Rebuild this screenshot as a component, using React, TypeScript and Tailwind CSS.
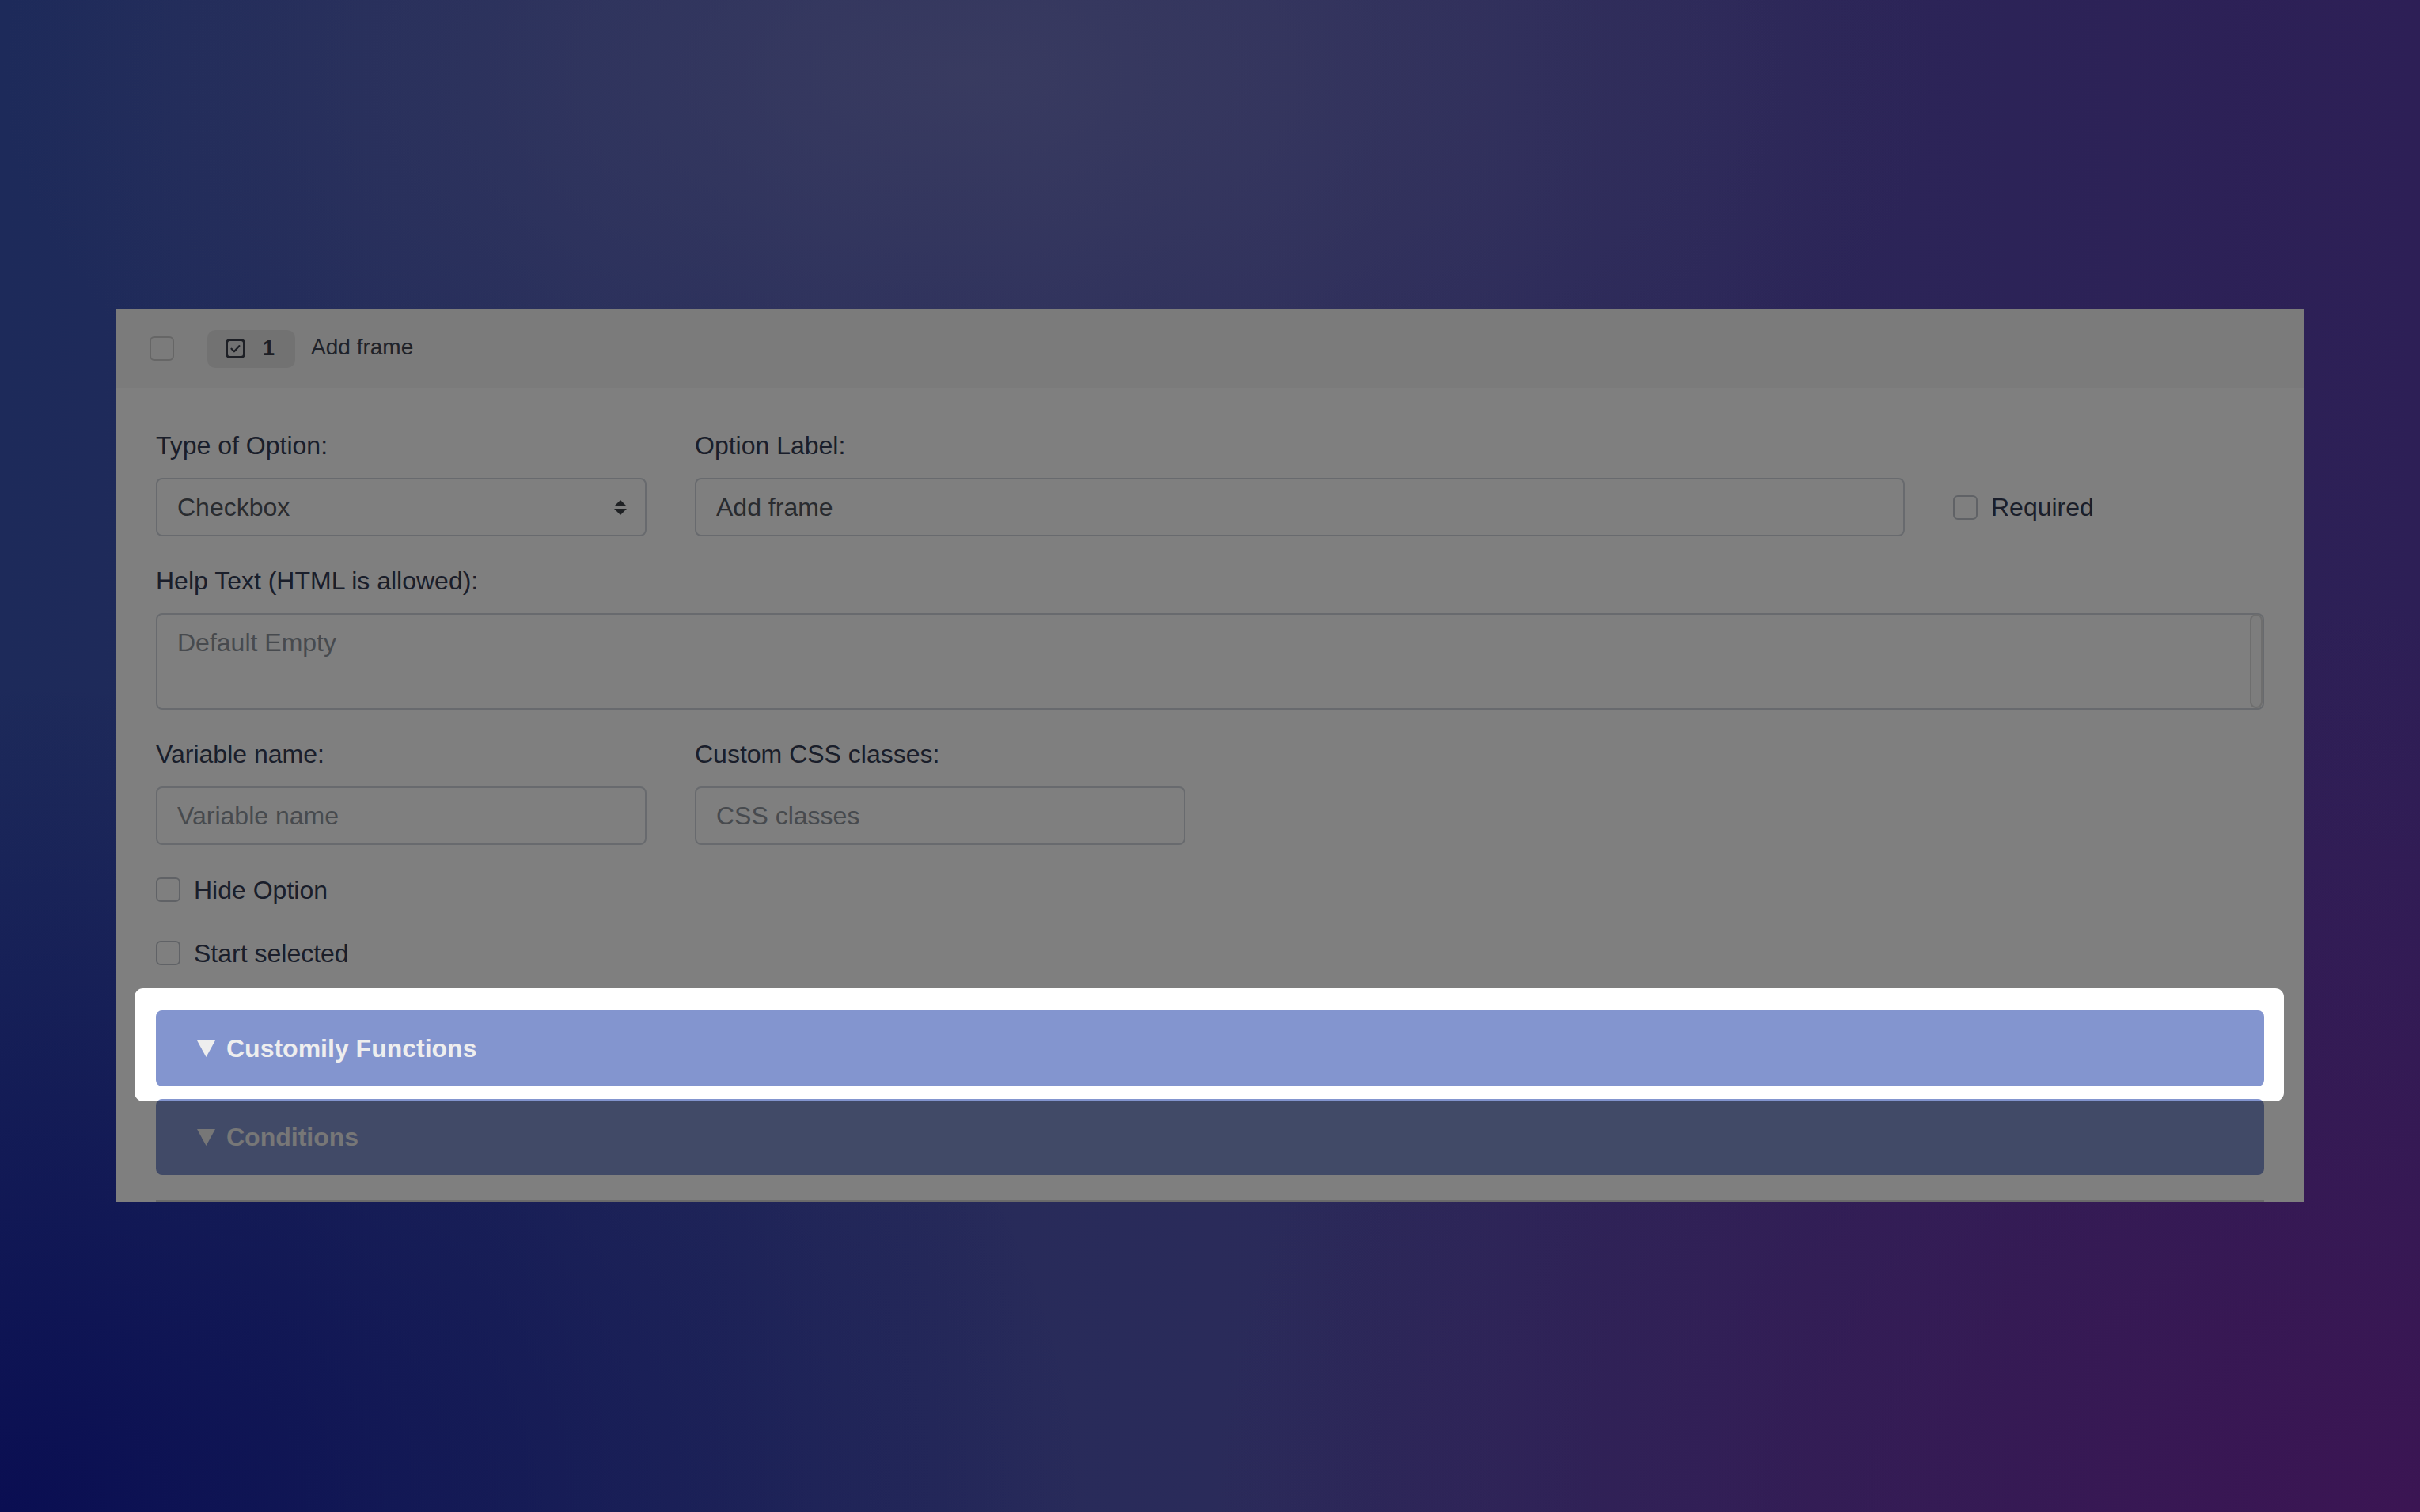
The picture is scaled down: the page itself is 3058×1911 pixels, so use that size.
function Box({ className = '' }: { className?: string }) {
  return <span className={`block h-[31px] w-[31px] shrink-0 rounded-[6px] border-2 ${className}`} />;
}

function FieldLabel({ children }: { children: React.ReactNode }) {
  return <label className="mb-[17px] block text-[32px] leading-[47px] text-[#343d55]">{children}</label>;
}

function CheckRow({ label, last = false }: { label: string; last?: boolean }) {
  return (
    <div className={`flex h-[47px] items-center gap-[17px] ${last ? '' : 'mb-[33px]'}`}>
      <Box className="border-[#c0c5cc] bg-white" />
      <span className="text-[32px] text-[#343d55]">{label}</span>
    </div>
  );
}

function Caret() {
  return (
    <svg width="23" height="21" viewBox="0 0 23 21" className="shrink-0">
      <polygon points="0,0 23,0 11.5,21" fill="currentColor" />
    </svg>
  );
}

const input =
  'h-[74px] w-full rounded-[8px] border-2 border-[#d0d5dc] bg-white px-[25px] text-[32px] text-[#52575e] outline-none placeholder:text-[#8f959d]';

const bar =
  'relative flex h-[96px] items-center gap-[14px] rounded-[8px] bg-[#8395cf] pl-[52px] text-[32px] font-bold text-[#eeeeee]';

export default function App() {
  return (
    <div className="min-h-screen bg-[radial-gradient(ellipse_40%_35%_at_40%_5%,rgba(62,64,98,0.75),transparent),radial-gradient(ellipse_45%_55%_at_0%_100%,#0a0e52,transparent),radial-gradient(ellipse_50%_60%_at_100%_100%,#3b1553,transparent),linear-gradient(90deg,#1d2a5a,#2a2b5a_50%,#2d1f56)] pt-[390px] font-['Liberation_Sans',Arial,sans-serif]">
      <div className="relative mx-auto w-[2766px] overflow-hidden bg-white">
        {/* header */}
        <div className="flex h-[101px] items-center bg-[#f6f6f6] pl-[43px]">
          <Box className="border-[#cccccc] bg-transparent" />
          <div className="ml-[42px] flex h-[48px] items-center gap-[22px] rounded-[10px] bg-[#e5e5e5] pl-[23px] pr-[26px]">
            <svg width="25" height="25" viewBox="0 0 25 25" fill="none" stroke="#3a3f4a">
              <rect x="1.5" y="1.5" width="22" height="22" rx="4" strokeWidth="3" />
              <path d="M7.5 12.8l3.4 3.4 6.4-7" strokeWidth="2.3" strokeLinecap="round" strokeLinejoin="round" />
            </svg>
            <span className="text-[27px] font-bold text-[#3a3f4a]">1</span>
          </div>
          <span className="mb-[4px] ml-[20px] text-[28px] text-[#3e4452]">Add frame</span>
        </div>

        {/* body */}
        <div className="px-[51px] pt-[49px]">
          <div className="mb-[33px] flex gap-[61px]">
            <div className="w-[620px]">
              <FieldLabel>Type of Option:</FieldLabel>
              <div className="flex h-[74px] items-center justify-between rounded-[8px] border-2 border-[#d0d5dc] bg-white pl-[25px] pr-[23px] text-[32px] text-[#52575e]">
                <span>Checkbox</span>
                <svg width="16" height="19" viewBox="0 0 16 19" fill="#3e4249">
                  <polygon points="0,8 8,0 16,8" />
                  <polygon points="0,11 8,19 16,11" />
                </svg>
              </div>
            </div>
            <div className="w-[1529px]">
              <FieldLabel>Option Label:</FieldLabel>
              <input className={input} defaultValue="Add frame" />
            </div>
            <div className="flex h-[74px] items-center gap-[17px] self-end">
              <Box className="border-[#c0c5cc] bg-white" />
              <span className="text-[32px] text-[#343d55]">Required</span>
            </div>
          </div>

          <div className="mb-[33px]">
            <FieldLabel>Help Text (HTML is allowed):</FieldLabel>
            <div className="relative">
              <textarea
                className="block h-[122px] w-full resize-none rounded-[8px] border-2 border-[#d0d5dc] bg-white px-[25px] pt-[12px] text-[32px] leading-[47px] text-[#52575e] outline-none placeholder:text-[#8f959d]"
                placeholder="Default Empty"
              />
              <span className="absolute bottom-[2px] right-[2px] top-[1px] w-[16px] rounded-full border-2 border-[#dcdcdc] bg-[#fafafa]" />
            </div>
          </div>

          <div className="mb-[33px] flex gap-[61px]">
            <div className="w-[620px]">
              <FieldLabel>Variable name:</FieldLabel>
              <input className={input} placeholder="Variable name" />
            </div>
            <div className="w-[620px]">
              <FieldLabel>Custom CSS classes:</FieldLabel>
              <input className={input} placeholder="CSS classes" />
            </div>
          </div>

          <CheckRow label="Hide Option" />
          <CheckRow label="Start selected" last />

          {/* highlighted section */}
          <div className="relative mt-[49px]">
            <div className="absolute -bottom-[19px] -left-[27px] -right-[25px] -top-[28px] rounded-[11px] bg-white" />
            <div className={bar}>
              <Caret />
              <span>Customily Functions</span>
            </div>
            <div className="pointer-events-none absolute -bottom-[19px] -left-[27px] -right-[25px] -top-[28px] z-20 rounded-[11px] shadow-[0_0_0_4000px_rgba(0,0,0,0.5)]" />
          </div>

          <div className={`mt-[16px] ${bar}`}>
            <Caret />
            <span>Conditions</span>
          </div>

          <div className="mt-[32px] h-[2px] bg-[#d5d5d5]" />
        </div>
      </div>
    </div>
  );
}
